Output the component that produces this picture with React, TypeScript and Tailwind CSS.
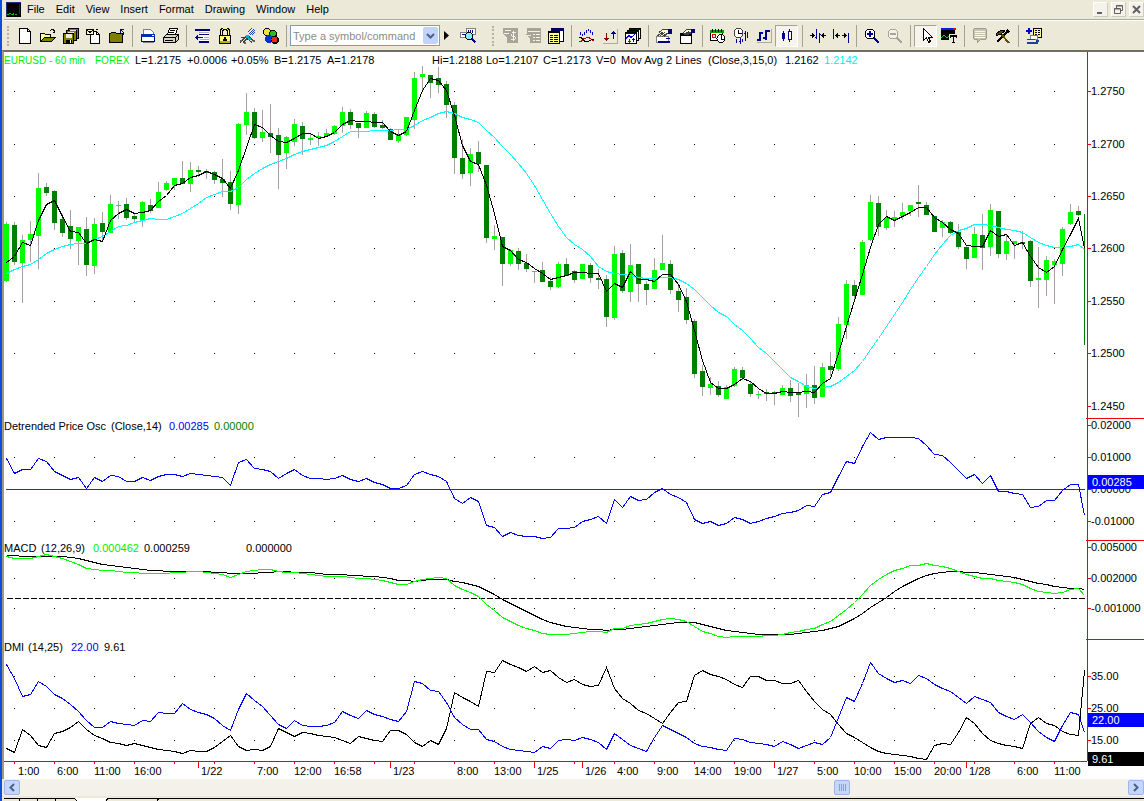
import { ReactNode } from 'react';

// [high, body top, body bottom, low, rising]
type Bar = [number, number, number, number, 0 | 1];

const bars: Bar[] = [
  [222, 224, 281, 282, 1], [222, 225, 262, 265, 0], [235, 240, 263, 303, 1], [221, 234, 240, 262, 1],
  [173, 188, 236, 269, 1], [183, 187, 193, 196, 0], [190, 191, 223, 230, 0], [214, 219, 233, 237, 0],
  [210, 226, 239, 249, 0], [227, 227, 241, 265, 1], [217, 229, 265, 276, 0], [218, 224, 266, 274, 1],
  [212, 223, 232, 240, 0], [195, 204, 233, 233, 1], [201, 205, 206, 219, 1], [198, 204, 218, 220, 0],
  [213, 216, 219, 222, 0], [201, 202, 221, 227, 1], [199, 205, 211, 213, 0], [182, 192, 208, 208, 1],
  [181, 183, 190, 191, 1], [178, 178, 185, 190, 1], [161, 178, 184, 184, 0], [162, 170, 184, 192, 1],
  [166, 170, 172, 177, 0], [169, 171, 173, 179, 0], [171, 172, 180, 184, 0], [159, 179, 183, 197, 0],
  [171, 182, 204, 210, 0], [123, 124, 205, 214, 1], [93, 112, 125, 135, 1], [108, 112, 138, 139, 0],
  [110, 132, 138, 142, 1], [104, 133, 137, 153, 0], [128, 135, 155, 189, 0], [136, 137, 153, 169, 1],
  [119, 124, 142, 146, 1], [122, 126, 139, 155, 0], [134, 138, 140, 145, 1], [132, 136, 138, 146, 1],
  [129, 133, 136, 137, 1], [125, 126, 134, 135, 1], [107, 112, 126, 133, 1], [109, 112, 125, 129, 0],
  [123, 123, 128, 138, 0], [111, 113, 128, 128, 1], [112, 114, 127, 128, 0], [120, 125, 128, 129, 0],
  [128, 129, 140, 140, 0], [130, 135, 141, 143, 1], [117, 117, 135, 136, 1], [72, 78, 120, 129, 1],
  [66, 74, 77, 91, 1], [75, 75, 83, 98, 0], [67, 78, 85, 93, 0], [81, 84, 105, 118, 0],
  [102, 105, 158, 174, 0], [139, 158, 174, 179, 0], [148, 154, 173, 186, 1], [141, 152, 164, 172, 0],
  [165, 165, 238, 243, 0], [225, 236, 239, 250, 1], [237, 237, 264, 286, 0], [249, 250, 264, 266, 1],
  [248, 251, 264, 270, 0], [254, 263, 269, 272, 0], [271, 271, 272, 283, 1], [262, 270, 282, 282, 0],
  [277, 281, 287, 290, 0], [262, 264, 287, 288, 1], [258, 264, 276, 276, 0], [270, 271, 280, 283, 0],
  [264, 264, 279, 279, 1], [263, 265, 278, 283, 0], [269, 278, 280, 289, 0], [275, 279, 317, 327, 0],
  [246, 254, 318, 320, 1], [250, 253, 291, 293, 0], [244, 265, 292, 302, 1], [264, 264, 284, 302, 0],
  [281, 284, 290, 305, 0], [258, 270, 289, 289, 1], [235, 263, 270, 270, 1], [260, 264, 290, 294, 0],
  [285, 291, 300, 312, 0], [288, 297, 320, 324, 0], [319, 321, 374, 378, 0], [365, 371, 387, 396, 0],
  [377, 384, 388, 395, 1], [381, 386, 395, 397, 0], [385, 387, 399, 399, 1], [367, 369, 386, 387, 1],
  [367, 370, 378, 380, 0], [381, 384, 394, 397, 0], [391, 394, 395, 399, 1], [389, 392, 394, 401, 0],
  [391, 392, 394, 405, 0], [385, 388, 395, 395, 1], [380, 388, 396, 402, 0], [383, 392, 395, 417, 0],
  [374, 385, 394, 408, 1], [366, 385, 398, 404, 0], [363, 367, 397, 397, 1], [352, 366, 370, 376, 0],
  [317, 324, 369, 371, 1], [280, 284, 325, 339, 1], [280, 285, 296, 300, 0], [240, 242, 295, 295, 1],
  [195, 202, 240, 241, 1], [196, 203, 227, 236, 0], [210, 218, 228, 230, 1], [211, 217, 220, 227, 1],
  [203, 212, 216, 220, 1], [205, 205, 211, 216, 1], [185, 202, 204, 217, 0], [202, 205, 215, 215, 0],
  [216, 216, 232, 232, 0], [220, 222, 228, 237, 1], [221, 222, 233, 234, 0], [224, 232, 247, 249, 0],
  [245, 247, 259, 269, 0], [227, 234, 258, 258, 1], [214, 235, 248, 270, 0], [204, 210, 247, 256, 1],
  [211, 211, 254, 258, 0], [235, 241, 254, 260, 1], [241, 241, 244, 259, 1], [231, 242, 244, 249, 0],
  [240, 241, 281, 287, 0], [247, 278, 280, 308, 1], [256, 260, 280, 296, 1], [259, 261, 265, 304, 1],
  [227, 229, 264, 276, 1], [204, 212, 224, 225, 1], [206, 211, 215, 216, 0],
];

const fastAverage = [
  262, 256, 242, 245, 220, 204, 200, 216, 231, 232, 243, 239, 241, 220, 213, 209, 213, 212, 210, 201,
  195, 185, 183, 177, 175, 171, 174, 178, 188, 170, 147, 124, 127, 135, 141, 142, 138, 133, 133, 138,
  136, 132, 124, 120, 121, 121, 122, 122, 131, 135, 131, 110, 90, 78, 80, 90, 115, 145, 161, 164,
  185, 213, 246, 250, 259, 262, 268, 273, 279, 277, 275, 272, 272, 273, 273, 291, 283, 287, 271, 279,
  279, 281, 274, 274, 284, 301, 330, 360, 382, 388, 388, 384, 378, 381, 388, 393, 393, 391, 392, 392,
  391, 392, 383, 378, 353, 326, 300, 274, 247, 224, 216, 220, 216, 212, 207, 207, 217, 222, 229, 233,
  245, 246, 246, 230, 236, 234, 245, 242, 256, 267, 272, 266, 249, 234, 218, 248,
];

const slowAverage = [
  273, 269, 266, 264, 259, 253, 249, 246, 244, 243, 243, 239, 236, 231, 226, 225, 222, 220, 218, 219,
  219, 216, 213, 208, 203, 197, 194, 191, 191, 187, 179, 173, 168, 164, 161, 158, 154, 151, 149, 147,
  145, 141, 136, 131, 131, 131, 130, 130, 130, 129, 129, 125, 120, 117, 113, 111, 113, 117, 119, 122,
  130, 137, 146, 154, 163, 173, 185, 199, 213, 226, 237, 244, 249, 256, 266, 271, 273, 274, 275, 277,
  278, 278, 277, 277, 279, 283, 289, 297, 305, 312, 316, 324, 330, 338, 347, 353, 361, 369, 377, 381,
  386, 388, 387, 386, 382, 376, 370, 361, 349, 338, 326, 314, 302, 289, 277, 266, 254, 244, 235, 230,
  228, 224, 224, 225, 227, 229, 230, 232, 237, 242, 245, 247, 247, 246, 244, 249,
];

const detrended = [
  458, 473, 469, 469, 458, 461, 471, 475, 479, 477, 488, 477, 481, 475, 476, 481, 481, 477, 480, 476,
  474, 474, 476, 473, 474, 475, 476, 477, 485, 462, 459, 468, 469, 471, 478, 473, 469, 475, 478, 478,
  479, 478, 475, 479, 481, 478, 482, 484, 488, 488, 485, 474, 471, 474, 476, 481, 498, 503, 497, 501,
  525, 527, 536, 532, 535, 536, 536, 538, 537, 528, 528, 527, 521, 519, 516, 523, 499, 507, 496, 500,
  499, 492, 488, 494, 497, 502, 519, 523, 521, 525, 523, 517, 519, 523, 521, 518, 516, 513, 512, 510,
  505, 506, 494, 492, 476, 461, 463, 446, 432, 439, 437, 437, 437, 437, 438, 445, 454, 455, 462, 470,
  478, 474, 483, 475, 491, 491, 493, 494, 507, 506, 500, 500, 490, 484, 484, 515,
];

const macd = [
  556, 558, 558, 558, 556, 554, 556, 558, 561, 564, 568, 569, 570, 570, 571, 572, 572, 573, 573, 573,
  573, 572, 572, 571, 571, 572, 573, 574, 577, 574, 571, 570, 569, 569, 571, 572, 572, 573, 574, 575,
  576, 576, 576, 577, 578, 578, 579, 580, 582, 584, 584, 581, 579, 578, 577, 578, 585, 589, 592, 596,
  604, 610, 617, 621, 625, 628, 630, 633, 634, 634, 634, 633, 632, 631, 631, 632, 628, 628, 625, 624,
  623, 621, 619, 618, 619, 621, 626, 631, 633, 636, 637, 636, 636, 636, 636, 635, 635, 634, 632, 631,
  629, 628, 624, 621, 615, 609, 602, 594, 585, 579, 574, 570, 568, 565, 565, 563, 565, 566, 568, 571,
  574, 576, 578, 578, 580, 581, 582, 584, 588, 591, 592, 593, 592, 589, 588, 595,
];

const macdSignal = [
  555, 555, 556, 556, 556, 556, 556, 556, 557, 558, 560, 562, 564, 565, 566, 567, 568, 569, 570, 570,
  571, 571, 571, 571, 571, 571, 572, 572, 573, 573, 573, 573, 572, 572, 571, 571, 572, 572, 572, 573,
  574, 574, 574, 575, 575, 576, 576, 577, 578, 580, 580, 581, 580, 579, 579, 579, 581, 582, 584, 586,
  590, 594, 599, 603, 607, 611, 615, 619, 622, 624, 626, 627, 628, 629, 629, 630, 629, 629, 628, 627,
  626, 625, 624, 623, 622, 622, 622, 624, 626, 628, 630, 631, 632, 633, 634, 634, 634, 634, 634, 633,
  632, 631, 630, 628, 626, 622, 618, 613, 607, 602, 597, 591, 586, 582, 578, 575, 573, 572, 571, 571,
  572, 572, 573, 574, 575, 576, 577, 579, 581, 583, 584, 586, 587, 588, 588, 589,
];

const dmiPlus = [
  664, 678, 696, 694, 681, 686, 694, 698, 704, 711, 720, 727, 727, 721, 723, 724, 725, 720, 721, 712,
  713, 713, 703, 709, 712, 714, 718, 725, 730, 709, 693, 700, 706, 715, 724, 728, 720, 725, 726, 726,
  725, 722, 711, 715, 718, 710, 714, 716, 719, 721, 711, 681, 683, 690, 691, 702, 717, 724, 729, 729,
  739, 741, 746, 749, 750, 751, 752, 746, 748, 740, 739, 740, 737, 739, 742, 749, 733, 739, 745, 748,
  751, 737, 725, 729, 733, 737, 743, 746, 747, 749, 750, 738, 739, 742, 743, 744, 746, 741, 744, 748,
  745, 742, 744, 737, 717, 697, 701, 683, 662, 673, 678, 682, 680, 683, 675, 678, 684, 688, 691, 697,
  703, 696, 699, 702, 712, 716, 719, 714, 722, 731, 737, 741, 725, 712, 714, 732,
];

const dmiMinus = [
  748, 752, 729, 735, 745, 747, 733, 731, 727, 721, 729, 735, 738, 742, 743, 745, 743, 745, 747, 749,
  750, 751, 753, 750, 751, 751, 747, 741, 735, 746, 750, 749, 750, 746, 728, 732, 736, 732, 733, 735,
  736, 737, 740, 743, 736, 738, 740, 741, 730, 730, 734, 742, 746, 740, 744, 728, 692, 697, 701, 706,
  671, 672, 660, 664, 667, 671, 666, 672, 670, 677, 682, 679, 684, 686, 685, 667, 688, 698, 703, 710,
  713, 718, 723, 712, 702, 701, 675, 670, 674, 676, 679, 684, 687, 676, 676, 680, 680, 683, 683, 680,
  691, 701, 709, 714, 724, 733, 737, 742, 747, 751, 753, 754, 755, 756, 758, 759, 745, 743, 744, 732,
  717, 723, 733, 740, 743, 745, 746, 748, 723, 717, 723, 725, 731, 734, 735, 670,
];

const PLOT_LEFT = 4;
const PLOT_WIDTH = 1083;
const LAST_X = 1084.5;

const barX = (i: number) => Math.min(6.5 + i * 8, LAST_X);

function Line({ values, color }: { values: number[]; color: string }) {
  return (
    <polyline
      points={values.map((v, i) => `${barX(i)},${v + 0.5}`).join(' ')}
      fill="none"
      stroke={color}
      vectorEffect="non-scaling-stroke"
    />
  );
}

interface PanelProps {
  top: number;
  height: number;
  grid: number[];
  ticks: [number, string][];
  badges?: [number, string, string][];
  separator?: boolean;
  title: ReactNode;
  children: ReactNode;
}

function Panel({ top, height, grid, ticks, badges = [], separator = true, title, children }: PanelProps) {
  const pct = (y: number) => `${((y - top) / height) * 100}%`;
  const columns = Array.from({ length: 27 }, (_, i) => 14 + i * 40);

  return (
    <section className="flex min-h-0">
      <div className="relative min-w-0 flex-1">
        <svg
          className="block h-full w-full"
          viewBox={`${PLOT_LEFT} ${top} ${PLOT_WIDTH} ${height}`}
          preserveAspectRatio="none"
          shapeRendering="crispEdges"
        >
          {grid.map((y) => columns.map((x) => <rect key={`${x}-${y}`} x={x} y={y} width="1" height="1" />))}
          {children}
        </svg>
        <div className="absolute top-0.5 left-0 flex whitespace-pre leading-[13px]">{title}</div>
      </div>
      <svg className="block h-full w-[57px] shrink-0 overflow-visible" shapeRendering="crispEdges">
        <rect x="0" y="0" width="1" height="100%" fill="#f00000" />
        {separator && <rect x="-1" y="0" width="58" height="1" fill="#f00000" />}
        {ticks.map(([y, label]) => (
          <g key={label}>
            <rect x="1" y={pct(y)} width="3" height="1" fill="#f00000" />
            <text x="4" y={pct(y)} dominantBaseline="central">{label}</text>
          </g>
        ))}
        {badges.map(([y, label, color]) => (
          <g key={label}>
            <rect x="1" y={pct(y)} width="56" height="14" fill={color} />
            <text x="5" y={pct(y + 7)} dominantBaseline="central" fill="#ffffff">{label}</text>
          </g>
        ))}
      </svg>
    </section>
  );
}

const timeLabels: [number, string][] = [
  [18, '1:00'], [57, '6:00'], [94, '11:00'], [134, '16:00'], [201, '1/22'], [257, '7:00'], [294, '12:00'],
  [334, '16:58'], [393, '1/23'], [457, '8:00'], [494, '13:00'], [537, '1/25'], [585, '1/26'], [617, '4:00'],
  [657, '9:00'], [694, '14:00'], [734, '19:00'], [777, '1/27'], [817, '5:00'], [854, '10:00'], [894, '15:00'],
  [934, '20:00'], [969, '1/28'], [1017, '6:00'], [1054, '11:00'],
];

function TimeAxis() {
  const pct = (x: number) => `${((x - PLOT_LEFT) / PLOT_WIDTH) * 100}%`;
  return (
    <div className="flex h-[18px] shrink-0">
      <svg className="block h-full min-w-0 flex-1 overflow-visible" shapeRendering="crispEdges">
        <rect width="100%" height="1" fill="#f00000" />
        {Array.from({ length: 27 }, (_, i) => (
          <rect key={i} x={pct(14 + i * 40)} width="1" height="3" fill="#f00000" />
        ))}
        {[198, 390, 534, 582, 774, 966].map((x) => (
          <rect key={x} x={pct(x)} width="1" height="7" fill="#f00000" />
        ))}
        {timeLabels.map(([x, label]) => (
          <text key={x} x={pct(x)} y="10" dominantBaseline="central">{label}</text>
        ))}
      </svg>
      <div className="w-[57px] shrink-0" />
    </div>
  );
}

const icons: Record<string, ReactNode> = {
  New: <path d="M2.5.5h8l3 3v12h-11zM10.500.5v3h3" fill="#fff" stroke="#000" />,
  Open: (
    <>
      <path d="M.5 13.500v-8h4l1 1h5v3" fill="#ffff9c" stroke="#000" />
      <path d="M.5 13.500l4-4h11l-4 4z" fill="#808000" stroke="#000" />
      <path d="M9.500 3.500l2-2h2l1 2M12.500 4.500h2v-3" fill="none" stroke="#000" />
    </>
  ),
  'Save All': (
    <>
      <path d="M5.500.5h10v10h-10z" fill="#808000" stroke="#000" />
      <path d="M3.500 2.500h10v10h-10z" fill="#808000" stroke="#000" />
      <path d="M.5 5.500h10v10h-10z" fill="#808000" stroke="#000" />
      <path d="M7 2h6v1H7zM5 4h6v1H5zM3 6h6v4H3z" fill="#ece9d8" />
      <path d="M3 12h6v3H3z" />
      <path d="M7 12h1v3H7z" fill="#fff" />
    </>
  ),
  'Send Page': (
    <>
      <path d="M4.500 3.500h6l3 3v9h-9z" fill="#fff" stroke="#000" />
      <path d="M10.500 3.500v3h3" fill="none" stroke="#000" />
      <path d="M.5 1.500h7v5h-7z" fill="#fff8c0" stroke="#000" />
      <path d="M.5 1.500l3.500 3 3.500-3M9.500 1.500h2v-1" fill="none" stroke="#000" />
    </>
  ),
  'Close Folder': (
    <>
      <path d="M.5 14.500v-9h1l1-1h4l1 1h6v9z" fill="#808000" stroke="#000" />
      <path d="M11 1h4v1h-4zM11 1h1v4h-1zM12 2h1v1h-1zM13 3h1v1h-1zM14 4h1v3h-1z" fill="#000080" />
    </>
  ),
  'Page Setup': (
    <>
      <path d="M3.500 1.500h7l3 3v10h-10z" fill="#fff" stroke="#808080" />
      <path d="M1.500 6.500h13v7h-13z" fill="#fff" stroke="#000080" />
      <path d="M1 6h14v3H1z" fill="#0030b0" />
      <path d="M12 7h2v1h-2z" fill="#fff" />
    </>
  ),
  Print: (
    <>
      <path d="M4.500 6.500l2-6h8l-2 6z" fill="#fff" stroke="#000" />
      <path d="M.5 9.500l3-3h12v5l-3 3h-12z" fill="#d8d4c4" stroke="#000" />
      <path d="M.5 9.500h12v5M12.500 9.500l3-3M7 2.500h5M6 4.500h5M2 12.500h8" fill="none" stroke="#000" />
      <path d="M9 11h2v1H9z" fill="#e0e000" />
    </>
  ),
  'Insert Row': (
    <>
      <path d="M6 3h9v11H6z" fill="#fff" />
      <path d="M1 1h15v2H1zM5 6h10v1H5zM5 13h10v2H5z" fill="#000080" />
      <path d="M1 9h1v1H1zM2 8h1v3H2zM3 7h1v5H3zM4 9h5v1H4z" fill="#000080" />
      <path d="M5 4h10v1H5zM10 9h5v1h-5zM6 11h9v1H6z" fill="#b0b0b8" />
    </>
  ),
  Lock: (
    <>
      <path d="M4.500 7.500v-5l2-2h3l2 2v5" fill="none" stroke="#000" strokeWidth="3" />
      <path d="M4.500 7.500v-5l2-2h3l2 2v5" fill="none" stroke="#ffff80" />
      <path d="M2.500 7.500h11v8h-11z" fill="#ffff80" stroke="#000" />
      <path d="M3 13h10v2H3z" fill="#c0b000" />
      <path d="M7 9h2v2h1v2H6v-2h1z" />
    </>
  ),
  Trendlines: (
    <>
      <path d="M8 4l4-4M9 6l5-5M10 7l5-5M12 7l3-3" stroke="#2040c0" />
      <path d="M0 14.500l6-6h3l5 5M3 14.500l4-4 5 4M1 9.500h5" fill="none" stroke="#404040" />
      <path d="M6 7h3v3H6zM8 10h3v2H8z" fill="#00b8c8" />
      <path d="M0 12h2v2H0zM4 14h2v2H4zM13 12h2v2h-2z" fill="#606060" />
    </>
  ),
  Symbols: (
    <>
      <circle cx="4" cy="4" r="4" fill="#000" />
      <circle cx="4" cy="4" r="3" fill="#f0e040" />
      <circle cx="10" cy="6" r="4" fill="#000" />
      <circle cx="10" cy="5.500" r="3" fill="#20c020" />
      <circle cx="6" cy="11" r="4" fill="#0030d0" />
      <circle cx="12" cy="12" r="4" fill="#000" />
      <circle cx="11.500" cy="11.500" r="3" fill="#f02020" />
    </>
  ),
  Lookup: (
    <>
      <path d="M6.500.5h9v6h-9zM.5 4.500h7v5h-7z" fill="#fff" stroke="#808080" />
      <path d="M8 2h1v3H8zM10 2h1v3h-1zM12 2h1v3h-1zM2 6h4v1H2z" fill="#0000a0" />
      <circle cx="9" cy="8" r="3.500" fill="#80f0ff" stroke="#000" />
      <path d="M11.500 10.500l4 4" stroke="#000080" strokeWidth="2" />
    </>
  ),
  'Trade Bar': (
    <>
      <path d="M1 0h15v15H5v-5L1 5z" fill="#a8a498" />
      <path d="M3 2h6v1H3zM10 4h4v1h-4zM9 6h1v2H9zM10 8h3v1h-3zM13 9h1v2h-1zM9 11h4v1H9zM11 3h1v10h-1zM2 5h5v1H2z" fill="#f4f2e8" />
    </>
  ),
  'Trade Manager': (
    <>
      <path d="M2 0h14v15H5v-4L0 6h2z" fill="#a8a498" />
      <path d="M3 3h12v1H3zM8 6h2v1H8zM11 6h4v1h-4zM8 9h2v1H8zM11 9h4v1h-4zM8 12h2v1H8zM11 12h4v1h-4zM2 7h4v1H2z" fill="#f4f2e8" />
    </>
  ),
  'Quote Table': (
    <>
      <path d="M3.500.5h12v13h-12z" fill="#fff" stroke="#000" />
      <path d="M3 0h13v3H3z" fill="#000060" />
      <path d="M.5 3.500h11v12H.5z" fill="#ffff80" stroke="#000" />
      <path d="M0 3h12v2H0zM2 7h3v1H2zM6 7h4v1H6zM2 9h3v1H2zM6 9h4v1H6zM2 11h3v1H2zM6 11h4v1H6zM2 13h3v1H2zM6 13h4v1H6z" />
    </>
  ),
  Indicator: (
    <>
      <path d="M1 4h1v3H1zM3 6h1v2H3zM5 4h1v3H5zM7 2h1v3H7zM9 1h1v2H9zM11 2h1v3h-1zM13 4h1v3h-1z" fill="#0000c0" />
      <path d="M0 13.500h2l3-3h1l2-1h2l4 3h1" fill="none" stroke="#c00000" />
      <path d="M0 9.500h2l4 4h3l4-2h2" fill="none" stroke="#000" />
    </>
  ),
  Signal: (
    <>
      <path d="M15 1h1v15H1v-1h14z" fill="#b0ac9c" />
      <path d="M4 5h1v5h2v1H6v1H5v1H4v-1H3v-1H2v-1h2z" fill="#900000" />
      <path d="M11 3h1v1h1v1h1v1h-2v5h-1V6H9V5h1V4h1z" fill="#000090" />
    </>
  ),
  Strategy: (
    <>
      <path d="M4.500.5h11v10h-11z" fill="#fff" stroke="#000" />
      <path d="M2.500 2.500h11v10h-11z" fill="#fff" stroke="#000" />
      <path d="M.5 4.500h11v11H.5z" fill="#fff" stroke="#000" />
      <path d="M5 1h10v1H5zM3 3h10v1H3zM1 5h10v1H1z" fill="#000080" />
      <path d="M1 10.500l3-3 2 2 4-3" fill="none" stroke="#0000f0" />
      <path d="M4 11h1v4H4zM3 13h3v1H3z" fill="#c00000" />
      <path d="M8 10h1v4H8zM7 11h3v1H7z" fill="#0000c0" />
    </>
  ),
  'Format Window': (
    <>
      <path d="M.5 8.500h12v6H.5z" fill="#fff" stroke="#808080" />
      <path d="M3 4.500l4-3h8v4h-4l-3 3" fill="#fff8e0" stroke="#404040" />
      <path d="M12 1h4v5h-4zM2 13h12v2H2zM10 10h4v1h-4z" fill="#000080" />
      <path d="M1 8l6-4M4 8l5-4M6 9l5-4" stroke="#404040" />
    </>
  ),
  'Format Symbol': (
    <>
      <path d="M1.500 5.500h11v10h-11z" fill="#fff" stroke="#000" />
      <path d="M1 5h12v3H1z" />
      <path d="M4 5l4-4h5v3l-4 3z" fill="#fff8e0" stroke="#404040" />
      <path d="M12 1h4v4h-4z" fill="#000080" />
      <path d="M5 7l5-4M7 7l4-3" stroke="#404040" />
    </>
  ),
  Session: (
    <>
      <path d="M.5 2.500h12v10H.5z" fill="#fff" stroke="#000" />
      <path d="M0 2h14v3H0z" fill="#00a000" />
      <path d="M2 1h1v3H2zM5 1h1v3H5zM8 1h1v3H8zM11 1h1v3h-1z" />
      <circle cx="4" cy="8" r="2" fill="none" stroke="#e00000" />
      <circle cx="11" cy="10.500" r="4" fill="#fff" stroke="#000" />
      <path d="M11 7v4h3" fill="none" stroke="#000" />
    </>
  ),
  Interval: (
    <>
      <circle cx="5.500" cy="5" r="4.500" fill="#fff" stroke="#404040" />
      <path d="M5.500 2v3.500h3" fill="none" stroke="#000" />
      <path d="M3 11h1v4H3zM7 10h1v6H7zM6 13h1v1H6zM12 3h1v10h-1zM11 5h1v1h-1zM14 4h1v6h-1zM9 11h1v3H9z" fill="#000090" />
    </>
  ),
  'OHLC Bar': (
    <>
      <path d="M15 1h1v14H1v-1h14z" fill="#b0ac9c" />
      <path d="M3 4h2v9H3zM1 11h2v2H1zM5 4h2v2H5zM9 2h2v10H9zM7 9h2v2H7zM11 2h3v2h-3z" fill="#000090" />
    </>
  ),
  Candlestick: (
    <>
      <path d="M4 3h1v10H4zM3 5h3v6H3z" fill="#000090" />
      <path d="M10 1h1v2h-1zM10 11h1v3h-1z" fill="#000090" />
      <path d="M9.500 3.500h3v8h-3z" fill="#fff" stroke="#000090" />
    </>
  ),
  'Decrease Spacing': (
    <>
      <path d="M6 1h1v10H6zM9 5h1v10H9zM5 9h1v1H5zM10 6h1v1h-1z" fill="#000090" />
      <path d="M0 7h5v1H0zM3 6h1v3H3zM2 5h1v5H2zM11 7h5v1h-5zM12 6h1v3h-1zM13 5h1v5h-1z" />
    </>
  ),
  'Increase Spacing': (
    <>
      <path d="M0 1h1v10H0zM15 5h1v10h-1z" fill="#000090" />
      <path d="M2 7h5v1H2zM3 6h1v3H3zM4 5h1v5H4zM9 7h5v1H9zM12 6h1v3h-1zM11 5h1v5h-1z" />
    </>
  ),
  'Zoom In': (
    <>
      <circle cx="6" cy="6" r="5" fill="#fff" stroke="#000" />
      <path d="M3 5h6v2H3zM5 3h2v6H5z" fill="#000090" />
      <path d="M10 10l5 5" stroke="#000090" strokeWidth="2" />
    </>
  ),
  'Zoom Out': (
    <>
      <circle cx="6" cy="6" r="5" fill="#f4f2e8" stroke="#a8a498" />
      <path d="M3 5h6v2H3z" fill="#a8a498" />
      <path d="M10 10l5 5" stroke="#a8a498" strokeWidth="2" />
    </>
  ),
  Pointer: <path d="M5.500.5v12l3-3 2 5 2-1-2-4h4z" fill="#fff" stroke="#000" />,
  'Text Tool': (
    <>
      <path d="M0 1h14v11H0z" />
      <path d="M0 0h14v2H0z" fill="#0020f0" />
      <path d="M12 0h3v2h-3z" fill="#e00000" />
      <path d="M0 9.500l3-2 3 2 3-2" fill="none" stroke="#00e000" />
      <path d="M8 6h8v10H8z" fill="#ece9d8" />
      <path d="M9 7h7v3h-1V9h-2v5h1v1h-3v-1h1V9h-2v1H9z" />
    </>
  ),
  Comment: (
    <>
      <path d="M1.500 1.500l1-1h11l1 1v9l-1 1h-5l-3 3v-3h-3l-1-1z" fill="#c8c4b4" stroke="#a09c90" />
      <path d="M3 3h10v1H3zM3 5h10v1H3zM3 7h10v1H3zM3 9h10v1H3z" fill="#f8f6f0" />
    </>
  ),
  Tools: (
    <>
      <path d="M2 14L13 3" stroke="#000" strokeWidth="2" />
      <path d="M6 6l8 9" stroke="#605000" strokeWidth="2" />
      <path d="M1 6l5-4 4 1-3 2-1 2-2-1-2 2z" fill="#605000" stroke="#000" />
      <path d="M13 0v2l2 1-2 2-2-2z" />
    </>
  ),
  'Add Study': (
    <>
      <path d="M7.500.5h8v9h-8z" fill="#ffff80" stroke="#000" />
      <path d="M9 2h2v1H9zM12 2h2v1h-2zM9 4h2v1H9zM12 4h2v1h-2zM9 6h2v1H9zM12 6h2v1h-2z" />
      <path d="M2 0h2v6H2zM0 2h6v2H0z" fill="#0000d0" />
      <path d="M4.500 7.500h7v4h-7z" fill="#fff" stroke="#808080" />
      <path d="M1 11h8v1H1zM1 14h11v2H1zM10 12h3v2h-3z" fill="#2040a0" />
    </>
  ),
};

function ToolButton({ name, pressed, disabled }: { name: string; pressed?: boolean; disabled?: boolean }) {
  return (
    <button
      type="button"
      aria-label={name}
      disabled={disabled}
      className={`flex h-[22px] w-[23px] shrink-0 items-center justify-center ${
        pressed ? 'border border-t-[#a5a294] border-l-[#a5a294] border-r-white border-b-white bg-[#f6f4ec]' : ''
      }`}
    >
      <svg width="16" height="16" viewBox="0 0 16 16" shapeRendering="crispEdges">
        {icons[name]}
      </svg>
    </button>
  );
}

function ToolGroup({ names, pressed = [], disabled = [] }: { names: string[]; pressed?: string[]; disabled?: string[] }) {
  return (
    <div className="flex shrink-0">
      {names.map((name) => (
        <ToolButton key={name} name={name} pressed={pressed.includes(name)} disabled={disabled.includes(name)} />
      ))}
    </div>
  );
}

function Divider() {
  return (
    <div className="flex w-2 shrink-0 justify-center">
      <div className="h-[22px] w-px bg-[#a5a294]" />
    </div>
  );
}

function Grip() {
  return <div className="h-5 w-0 shrink-0 border-l-2 border-dotted border-[#b5b2a3]" />;
}

function Toolbar() {
  return (
    <div className="flex h-[30px] shrink-0 items-center border-t border-white pl-[3px]">
      <Grip />
      <div className="w-1 shrink-0" />
      <ToolGroup names={['New', 'Open', 'Save All', 'Send Page', 'Close Folder']} />
      <Divider />
      <ToolGroup names={['Page Setup', 'Print']} />
      <Divider />
      <ToolGroup names={['Insert Row', 'Lock', 'Trendlines', 'Symbols']} />
      <Divider />
      <div className="flex h-[21px] w-[150px] shrink-0 items-center border border-[#7f9db9] bg-white">
        <input
          type="text"
          aria-label="Symbol or command"
          placeholder="Type a symbol/command"
          className="h-full w-0 min-w-0 flex-1 bg-transparent pl-0.5 text-[11px] text-black placeholder:text-[#8c8c84] outline-none"
        />
        <button
          type="button"
          aria-label="Show history"
          className="mr-px flex h-[17px] w-[15px] items-center justify-center rounded-xs bg-[#c1d3fb]"
        >
          <svg width="9" height="6" viewBox="0 0 9 6">
            <path d="M1 1l3.500 3.500L8 1" fill="none" stroke="#4d6185" strokeWidth="2" />
          </svg>
        </button>
      </div>
      <button type="button" aria-label="Run command" className="flex w-4 shrink-0 items-center pl-1">
        <svg width="5" height="9" viewBox="0 0 5 9">
          <path d="M0 0l5 4.500L0 9z" />
        </svg>
      </button>
      <ToolButton name="Lookup" />
      <div className="flex w-[19px] shrink-0 justify-center pl-2">
        <Grip />
      </div>
      <ToolGroup names={['Trade Bar', 'Trade Manager', 'Quote Table']} disabled={['Trade Bar', 'Trade Manager']} />
      <Divider />
      <ToolGroup names={['Indicator', 'Signal', 'Strategy']} />
      <Divider />
      <ToolGroup names={['Format Window', 'Format Symbol']} />
      <Divider />
      <ToolGroup names={['Session', 'Interval', 'OHLC Bar', 'Candlestick']} pressed={['Candlestick']} />
      <Divider />
      <ToolGroup names={['Decrease Spacing', 'Increase Spacing']} />
      <Divider />
      <ToolGroup names={['Zoom In', 'Zoom Out']} disabled={['Zoom Out']} />
      <Divider />
      <ToolGroup names={['Pointer', 'Text Tool']} pressed={['Pointer']} />
      <Divider />
      <ToolGroup names={['Comment', 'Tools']} disabled={['Comment']} />
      <Divider />
      <ToolGroup names={['Add Study']} />
    </div>
  );
}

const windowButtons: [string, ReactNode][] = [
  ['Minimize', <path d="M2 8h5v2H2z" fill="#606060" />],
  ['Restore', <path d="M3.500 4V1.500h6v5H7M1.500 4.500h6v5h-6zM3 2h6M1 5h6" fill="none" stroke="#606060" />],
  ['Close', <path d="M2 2l7 7M9 2l-7 7" stroke="#606060" strokeWidth="2" />],
];

function MenuBar() {
  return (
    <div className="flex h-5 shrink-0 items-center border-b border-[#a9ae9c] pb-px pl-0.5">
      <svg width="15" height="15" viewBox="0 0 15 15" shapeRendering="crispEdges">
        <path d="M0 0h15v15H0z" />
        <path d="M0 0h15v1H0zM0 0h1v15H0z" fill="#203080" />
        <path d="M1 12h2v1H1zM3 11h2v1H3zM5 12h2v1H5zM7 11h1v2H7zM9 12h2v1H9z" fill="#00c000" />
        <path d="M13 2h1v10h-1z" fill="#801010" />
      </svg>
      {['File', 'Edit', 'View', 'Insert', 'Format', 'Drawing', 'Window', 'Help'].map((item) => (
        <button key={item} type="button" className="pr-[5px] pl-1.5 leading-4">
          {item}
        </button>
      ))}
      <div className="ml-auto flex gap-[3px]">
        {windowButtons.map(([name, glyph]) => (
          <button
            key={name}
            type="button"
            aria-label={name}
            className="flex h-[15px] w-[15px] items-center justify-center border border-t-white border-l-white border-r-[#d0ccbc] border-b-[#d0ccbc] bg-[#f4f2ea]"
          >
            <svg width="11" height="11" viewBox="0 0 11 11">{glyph}</svg>
          </button>
        ))}
      </div>
    </div>
  );
}

function ScrollArrow({ name, d }: { name: string; d: string }) {
  return (
    <button
      type="button"
      aria-label={name}
      className="flex h-[15px] w-4 shrink-0 items-center justify-center rounded-xs border border-[#9fb5e8] bg-[#c5d5fc]"
    >
      <svg width="6" height="9" viewBox="0 0 6 9">
        <path d={d} fill="none" stroke="#4d6185" strokeWidth="2" />
      </svg>
    </button>
  );
}

function ScrollBar() {
  return (
    <div className="flex h-[17px] shrink-0 items-center bg-[#f3f1e9]">
      <ScrollArrow name="Scroll left" d="M5 1L1.500 4.500 5 8" />
      <div
        className="flex min-w-0 flex-1"
        role="scrollbar"
        aria-label="Chart history"
        aria-controls="chart"
        aria-orientation="horizontal"
        aria-valuenow={75}
      >
        <div className="w-[73.5%]" />
        <div className="flex h-[15px] w-4 items-center justify-center gap-px rounded-xs border border-[#9fb5e8] bg-[#c5d5fc]">
          {[0, 1, 2, 3].map((n) => (
            <div key={n} className="h-[7px] w-px bg-[#8ca0d8]" />
          ))}
        </div>
      </div>
      <ScrollArrow name="Scroll right" d="M1 1l3.500 3.500L1 8" />
    </div>
  );
}

function Price() {
  return (
    <Panel
      top={52}
      height={366}
      separator={false}
      grid={[91, 144, 196, 248, 301, 353]}
      ticks={[
        [91, '1.2750'], [144, '1.2700'], [196, '1.2650'], [248, '1.2600'], [301, '1.2550'], [353, '1.2500'], [406, '1.2450'],
      ]}
      title={
        <>
          <span className="w-[91px] text-[10px] text-[#00f000]">EURUSD - 60 min</span>
          <span className="w-10 text-[10px] text-[#00f000]">FOREX</span>
          <span className="w-[52px]">L=1.2175</span>
          <span className="w-11">+0.0006</span>
          <span className="w-[43px]">+0.05%</span>
          <span className="w-[53px]">B=1.2175</span>
          <span className="w-[105px]">A=1.2178</span>
          <span className="w-[54px]">Hi=1.2188</span>
          <span className="w-[57px]">Lo=1.2107</span>
          <span className="w-[53px]">C=1.2173</span>
          <span className="w-[25px]">V=0</span>
          <span className="w-[87px]">Mov Avg 2 Lines</span>
          <span className="w-[77px]">(Close,3,15,0)</span>
          <span className="w-[39px]">1.2162</span>
          <span className="text-[#00f0f0]">1.2142</span>
        </>
      }
    >
      {bars.map(([high, top, bottom, low, up], i) => (
        <g key={i}>
          <rect x={6 + i * 8} y={high} width="1" height={low - high} fill="#a8a0a4" />
          <rect x={4 + i * 8} y={top} width="5" height={bottom - top} fill={up ? '#00ff00' : '#008000'} />
        </g>
      ))}
      <rect x="1084" y="214" width="1" height="131" fill="#008000" />
      <Line values={slowAverage} color="#00ffff" />
      <Line values={fastAverage} color="#000000" />
    </Panel>
  );
}

function Detrended() {
  return (
    <Panel
      top={418}
      height={122}
      grid={[457, 521]}
      ticks={[[425, '0.02000'], [457, '0.01000'], [489, '0.00000'], [521, '-0.01000']]}
      badges={[[475, '0.00285', '#0000ff']]}
      title={
        <>
          <span className="w-[107px]">Detrended Price Osc</span>
          <span className="w-[58px]">(Close,14)</span>
          <span className="w-[45px] text-[#0000ff]">0.00285</span>
          <span className="text-[#008000]">0.00000</span>
        </>
      }
    >
      <rect x="6" y="489" width="1079" height="1" fill="#006000" />
      <Line values={detrended} color="#0000ff" />
    </Panel>
  );
}

function Macd() {
  return (
    <Panel
      top={540}
      height={99}
      grid={[578, 608]}
      ticks={[[547, '0.005000'], [578, '0.002000'], [608, '-0.001000']]}
      title={
        <>
          <span className="w-[37px]">MACD</span>
          <span className="w-[52px]">(12,26,9)</span>
          <span className="w-[51px] text-[#00f000]">0.000462</span>
          <span className="w-[102px]">0.000259</span>
          <span>0.000000</span>
        </>
      }
    >
      <path d="M7 598.500H1085" stroke="#000000" strokeDasharray="6 2" vectorEffect="non-scaling-stroke" />
      <Line values={macdSignal} color="#000000" />
      <Line values={macd} color="#00ff00" />
    </Panel>
  );
}

function Dmi() {
  return (
    <Panel
      top={639}
      height={122}
      grid={[676, 708, 740]}
      ticks={[[676, '35.00'], [708, '25.00'], [740, '15.00']]}
      badges={[[713, '22.00', '#0000ff'], [752, '9.61', '#000000']]}
      title={
        <>
          <span className="w-6">DMI</span>
          <span className="w-[43px]">(14,25)</span>
          <span className="w-[33px] text-[#0000ff]">22.00</span>
          <span>9.61</span>
        </>
      }
    >
      <Line values={dmiMinus} color="#000000" />
      <Line values={dmiPlus} color="#0000ff" />
    </Panel>
  );
}

export default function App() {
  return (
    <div className="flex h-screen flex-col border-l-2 border-[#0a50dc] bg-[#ece9d8] font-['Liberation_Sans',Arial,sans-serif] text-[11px] text-black">
      <header className="flex shrink-0 flex-col pl-0.5">
        <MenuBar />
        <Toolbar />
      </header>
      <main className="flex min-h-0 flex-1 flex-col border-t-2 border-l-2 border-t-[#716f64] border-l-[#9c998a] bg-white">
        <div
          id="chart"
          className="grid min-h-0 flex-1 grid-rows-[minmax(0,366fr)_minmax(0,122fr)_minmax(0,99fr)_minmax(0,122fr)]"
        >
          <Price />
          <Detrended />
          <Macd />
          <Dmi />
        </div>
        <TimeAxis />
      </main>
      <footer className="shrink-0 pl-0.5">
        <ScrollBar />
        <svg className="block h-[5px] w-full" shapeRendering="crispEdges">
          <rect y="2" width="100%" height="1" />
          <path d="M71 2l2 3h28l2-3z" fill="#fff" />
          <path d="M15.500 2v3M33.500 2v3M51.500 2v3M70 2l3 3M104 2l-2 3M155 2l-2 3" stroke="#000" />
        </svg>
      </footer>
    </div>
  );
}
